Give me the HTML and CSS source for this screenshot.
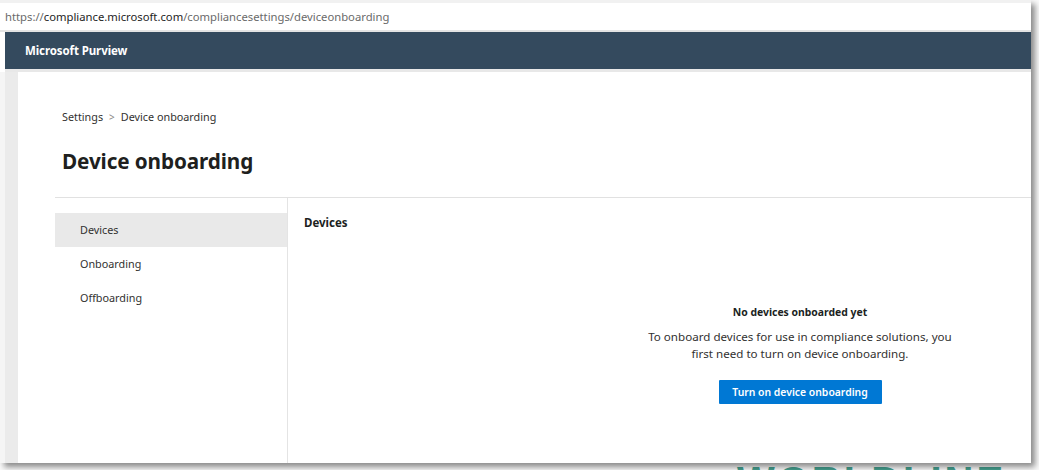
FILE: index.html
```html
<!DOCTYPE html>
<html lang="en">
<head>
<meta charset="utf-8">
<title>Device onboarding - Microsoft Purview</title>
<link rel="stylesheet" href="styles.css">
</head>
<body>
<div class="stage">
  <div class="watermark">WORLDLINE</div>
  <div class="window">
    <div class="urlbar"><span class="dim">https://</span><span class="host">compliance.microsoft.com</span><span class="dim">/compliancesettings/deviceonboarding</span></div>
    <header class="suitebar"><span class="brand">Microsoft Purview</span></header>
    <div class="main">
      <div class="rail"></div>
      <div class="content">
        <div class="pagehead">
          <nav class="crumbs"><span>Settings</span><span class="sep">&gt;</span><span>Device onboarding</span></nav>
          <h1 class="title">Device onboarding</h1>
        </div>
        <div class="body">
          <ul class="sidenav">
            <li class="navitem active">Devices</li>
            <li class="navitem">Onboarding</li>
            <li class="navitem">Offboarding</li>
          </ul>
          <section class="panel">
            <h2 class="panel-title">Devices</h2>
            <div class="empty">
              <div class="empty-title">No devices onboarded yet</div>
              <p class="empty-text">To onboard devices for use in compliance solutions, you first need to turn on device onboarding.</p>
              <button class="primary">Turn on device onboarding</button>
            </div>
          </section>
        </div>
      </div>
    </div>
  </div>
</div>
</body>
</html>
```

FILE: styles.css
```css
html, body {
  margin: 0;
  padding: 0;
  background: #ffffff;
  overflow: hidden;
}
body {
  font-family: "Noto Sans", "Open Sans", sans-serif;
  color: #323130;
}
.stage {
  position: relative;
  width: 1039px;
  height: 470px;
  overflow: hidden;
  background: #fafafa;
}
.watermark {
  position: absolute;
  left: 737px;
  top: 461px;
  font-family: "Liberation Sans", sans-serif;
  font-weight: 700;
  font-size: 40px;
  letter-spacing: 3px;
  color: #46a08f;
  line-height: 1;
}
.window {
  position: relative;
  width: 1031px;
  height: 463px;
  background: #ffffff;
  display: flex;
  flex-direction: column;
  box-shadow: 4px 4px 6px rgba(0, 0, 0, 0.45);
}
.urlbar {
  height: 27px;
  border-top: 3px solid #f1f1f1;
  border-bottom: 2px solid #e4e4e4;
  box-sizing: content-box;
  padding-left: 5px;
  font-size: 11.25px;
  line-height: 27px;
  white-space: nowrap;
  background: #fff;
}
.dim { color: #6a6a6a; }
.host { color: #1e1e1e; }
.suitebar {
  height: 37px;
  margin-left: 5px;
  background: #344a5e;
  display: flex;
  align-items: center;
  padding-left: 20px;
  border-bottom: 3px solid #e8e8e8;
  box-sizing: content-box;
}
.brand {
  color: #ffffff;
  font-weight: 700;
  font-size: 11.5px;
  letter-spacing: -0.1px;
}
.main {
  flex: 1;
  display: flex;
  min-height: 0;
  padding-left: 5px;
  background: #f5f5f5;
}
.rail {
  width: 13px;
  background: #ebebeb;
}
.content {
  flex: 1;
  background: #ffffff;
  display: flex;
  flex-direction: column;
  padding-left: 37px;
}
.pagehead {
  padding-left: 7px;
  height: 126px;
  box-sizing: border-box;
  padding-top: 37px;
  border-bottom: 1px solid #e1e1e1;
}
.crumbs {
  font-size: 10.8px;
  color: #323130;
  display: flex;
  gap: 6px;
  line-height: 16px;
}
.crumbs .sep {
  color: #8a8886;
  font-size: 10px;
}
.title {
  margin: 23px 0 0 0;
  font-size: 20.7px;
  font-weight: 700;
  line-height: 26px;
  color: #201f1e;
  letter-spacing: -0.1px;
}
.body {
  flex: 1;
  display: flex;
  min-height: 0;
}
.sidenav {
  list-style: none;
  margin: 0;
  padding: 15px 0 0 0;
  width: 232px;
  border-right: 1px solid #e4e4e4;
}
.navitem {
  height: 34px;
  line-height: 34px;
  padding-left: 25px;
  font-size: 10.8px;
  color: #323130;
}
.navitem.active {
  background: #e9e9e9;
}
.panel {
  flex: 1;
  padding: 16px 0 0 16px;
  display: flex;
  flex-direction: column;
}
.panel-title {
  margin: 0;
  font-size: 11.5px;
  font-weight: 700;
  line-height: 17px;
  color: #201f1e;
}
.empty {
  margin-top: 73px;
  width: 350px;
  align-self: flex-start;
  margin-left: 321px;
  display: flex;
  flex-direction: column;
  align-items: center;
  text-align: center;
}
.empty-title {
  font-size: 10.4px;
  font-weight: 700;
  line-height: 16px;
  color: #201f1e;
}
.empty-text {
  margin: 8px 0 0 0;
  font-size: 11.6px;
  line-height: 17px;
  color: #323130;
  width: 320px;
}
.primary {
  margin-top: 18px;
  height: 24px;
  width: 163px;
  border: none;
  border-radius: 1px;
  background: #0078d4;
  color: #ffffff;
  font-family: inherit;
  font-size: 10.4px;
  font-weight: 600;
  padding: 0;
}
```
